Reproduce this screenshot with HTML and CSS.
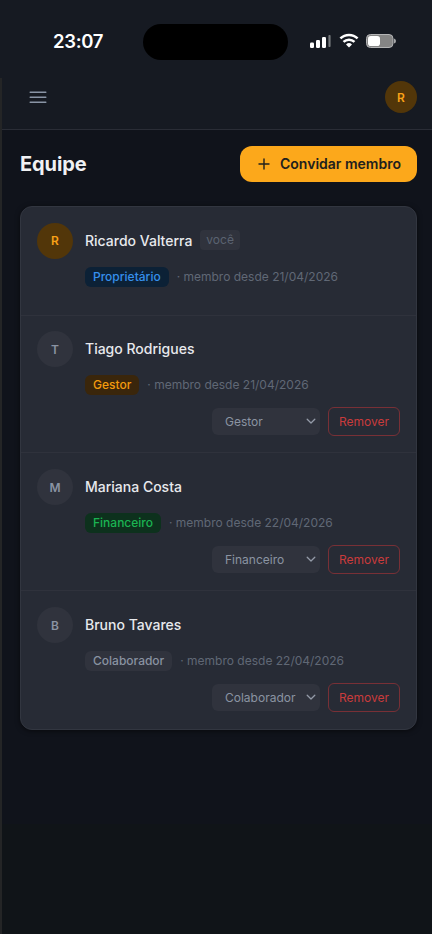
FILE: index.html
```html
<!DOCTYPE html>
<html lang="pt-BR">
<head>
<meta charset="utf-8">
<meta name="viewport" content="width=device-width, initial-scale=1">
<title>Equipe</title>
<link rel="stylesheet" href="styles.css">
</head>
<body>
<div class="status">
  <time class="clock">23:07</time>
  <div class="island"></div>
  <div class="indicators">
    <svg class="signal" width="22" height="14" viewBox="0 0 22 14"><rect x="0" y="8.5" width="4" height="5.5" rx="1.2" fill="#fff"/><rect x="6" y="6" width="4" height="8" rx="1.2" fill="#fff"/><rect x="12" y="3" width="4" height="11" rx="1.2" fill="#fff"/><rect x="18.4" y="1" width="2.2" height="12" rx=".8" fill="#74777b"/></svg>
    <svg class="wifi" width="20" height="15" viewBox="0 0 20 15" fill="none" stroke="#fff" stroke-width="2.5"><path d="M1.4 5.4a12.4 12.4 0 0 1 17.2 0M4.5 8.9a7.9 7.9 0 0 1 11 0"/><path d="M7 11.4a4.3 4.3 0 0 1 6 0L10 14.5z" fill="#fff" stroke="none"/></svg>
    <svg class="battery" width="31" height="14" viewBox="0 0 31 14"><rect x=".5" y=".5" width="26.5" height="13" rx="4" fill="#858585" stroke="#b4b5b6"/><rect x="2" y="2" width="12" height="10" rx="2.8" fill="#fff"/><path d="M28 4.5q2 .5 2 2.5t-2 2.5z" fill="#a6a7a9"/></svg>
  </div>
</div>
<div class="app">
  <header class="topbar">
    <svg class="menu" width="18" height="14" viewBox="0 0 18 14" stroke="#8994a5" stroke-width="1.5" stroke-linecap="round"><path d="M1.2 2.3h15.6M1.2 7.3h15.6M1.2 12.3h15.6"/></svg>
    <div class="avatar avatar-top">R</div>
  </header>
  <main>
    <div class="heading">
      <h1>Equipe</h1>
      <button class="invite"><svg width="12" height="12" viewBox="0 0 12 12" stroke="#21201d" stroke-width="1.4" stroke-linecap="round"><path d="M6 1v10M1 6h10"/></svg><span>Convidar membro</span></button>
    </div>
    <section class="card">
      <article class="row row-self">
        <div class="avatar">R</div>
        <div class="info">
          <div class="name"><span>Ricardo Valterra</span><span class="you">você</span></div>
          <div class="meta"><span class="badge owner">Proprietário</span><span class="since">· membro desde 21/04/2026</span></div>
        </div>
      </article>
      <article class="row row-first">
        <div class="avatar neutral">T</div>
        <div class="info">
          <div class="name"><span>Tiago Rodrigues</span></div>
          <div class="meta"><span class="badge manager">Gestor</span><span class="since">· membro desde 21/04/2026</span></div>
          <div class="actions"><button class="select"><span>Gestor</span><svg width="10" height="7" viewBox="0 0 10 7"><path d="M1.2 1.2 5 5l3.8-3.8"/></svg></button><button class="remove">Remover</button></div>
        </div>
      </article>
      <article class="row">
        <div class="avatar neutral">M</div>
        <div class="info">
          <div class="name"><span>Mariana Costa</span></div>
          <div class="meta"><span class="badge finance">Financeiro</span><span class="since">· membro desde 22/04/2026</span></div>
          <div class="actions"><button class="select"><span>Financeiro</span><svg width="10" height="7" viewBox="0 0 10 7"><path d="M1.2 1.2 5 5l3.8-3.8"/></svg></button><button class="remove">Remover</button></div>
        </div>
      </article>
      <article class="row">
        <div class="avatar neutral">B</div>
        <div class="info">
          <div class="name"><span>Bruno Tavares</span></div>
          <div class="meta"><span class="badge staff">Colaborador</span><span class="since">· membro desde 22/04/2026</span></div>
          <div class="actions"><button class="select"><span>Colaborador</span><svg width="10" height="7" viewBox="0 0 10 7"><path d="M1.2 1.2 5 5l3.8-3.8"/></svg></button><button class="remove">Remover</button></div>
        </div>
      </article>
    </section>
  </main>
</div>
</body>
</html>
```
FILE: styles.css
```css
* { box-sizing: border-box; }
body { margin: 0; height: 934px; overflow: hidden; display: flex; flex-direction: column; background: #101418; color: #e5e7eb; font-family: Inter, sans-serif; }
button { font: inherit; margin: 0; border: 0; white-space: nowrap; }
svg { display: block; flex: none; fill: none; }

.status { height: 78px; flex: none; display: grid; grid-template-columns: 143px 145px 1fr; align-items: start; background: #161a22; }
.clock { padding: 30px 0 0 53px; font-size: 18.5px; line-height: 22px; font-weight: 600; color: #fff; letter-spacing: -.3px; }
.island { margin-top: 24px; height: 36px; border-radius: 18px; background: #000; }
.indicators { display: flex; align-items: center; padding: 33px 0 0 22px; }
.wifi { margin-left: 7px; }
.battery { margin-left: 7px; }

.app { flex: 1; border-left: 2px solid #242526; background: linear-gradient(#10131b 746px, #101418 746px); }
.topbar { height: 52px; display: flex; align-items: center; justify-content: space-between; padding: 0 15px 13px 27px; background: #161a22; border-bottom: 1px solid #2a2d36; }
.avatar { width: 36px; height: 36px; flex: none; border-radius: 50%; display: flex; align-items: center; justify-content: center; background: #523609; color: #f9a117; font-size: 12px; font-weight: 600; }
.avatar-top { width: 32px; height: 32px; }
.neutral { background: #30333d; color: #8a93a3; }

main { padding: 16px 15px 0 18px; }
.heading { height: 36px; display: flex; align-items: center; justify-content: space-between; }
h1 { margin: 0; font-size: 20px; line-height: 28px; font-weight: 700; letter-spacing: -.1px; color: #f0f1f3; }
.invite { width: 177px; height: 36px; display: flex; align-items: center; padding: 0 16px 2px 18px; gap: 10px; border-radius: 12px; background: #fca81b; color: #21201d; font-size: 14px; font-weight: 600; }
.invite svg { position: relative; top: 1px; }

.card { margin-top: 24px; height: 524px; border: 1px solid #323640; border-radius: 12px; background: #272b35; box-shadow: 0 1px 5px #0008; }
.row { height: 138px; display: flex; gap: 12px; padding: 16px; border-bottom: 1px solid #2f323c; }
.row-self { height: 109px; padding-top: 15.5px; }
.row-first { height: 137px; padding-top: 15px; }
.row:last-child { border-bottom: 0; }
.info { flex: 1; min-width: 0; }
.name { height: 36px; padding-bottom: 1px; display: flex; align-items: center; gap: 8px; font-size: 14px; font-weight: 500; color: #e7e9ed; }
.you { height: 20px; padding: 0 6px; border-radius: 4px; background: #30333d; color: #5b6371; font-size: 12px; line-height: 19px; font-weight: 400; }
.meta { margin-top: 8px; height: 20px; display: flex; align-items: center; gap: 8px; font-size: 12px; line-height: 20px; white-space: nowrap; }
.row-self .meta { margin-top: 8.5px; }
.badge { height: 20px; padding: 0 8px; border-radius: 6px; font-weight: 500; }
.owner { background: #0c2136; color: #3590ed; }
.manager { background: #3a260b; color: #f39b0d; }
.finance { background: #0d311d; color: #1bb452; }
.staff { background: #30333d; color: #8992a1; }
.since { color: #606875; }
.actions { margin-top: 12px; height: 29px; display: flex; align-items: center; justify-content: flex-end; gap: 8px; }
.select { width: 108px; height: 27px; display: flex; align-items: center; justify-content: space-between; padding: 0 4px 0 13px; border-radius: 6px; background: #30333d; color: #8b94a2; font-size: 12px; }
.select path { stroke: #949ba8; stroke-width: 1.3; stroke-linecap: round; stroke-linejoin: round; }
.remove { width: 72px; height: 29px; padding: 0; border: 1px solid #783036; border-radius: 6px; background: transparent; color: #c93b3c; font-size: 12px; }
```
